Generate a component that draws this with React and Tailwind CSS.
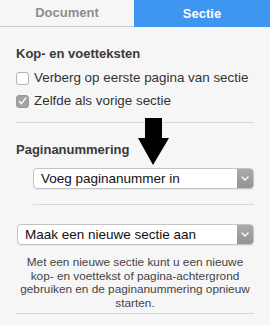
import React from 'react';

const Chevron = () => (
  <svg width="8" height="5" viewBox="0 0 8 5" fill="none">
    <path d="M1 1l3 3 3-3" stroke="#fff" strokeWidth="1.4" strokeLinecap="round" strokeLinejoin="round" />
  </svg>
);

const Select = ({ label, className = '' }) => (
  <div className={`flex h-[21px] rounded-[4px] border border-[#c4c4c4] bg-white overflow-hidden shadow-[0_1px_0_rgba(0,0,0,0.06)] ${className}`}>
    <div className="flex-1 pl-[7px] text-[13.5px] leading-[19px] text-[#111]">{label}</div>
    <div className="w-[16px] flex items-center justify-center bg-gradient-to-b from-[#ababab] to-[#939393]">
      <Chevron />
    </div>
  </div>
);

const Checkbox = ({ checked, label }) => (
  <div className="flex items-center gap-[5px] h-[14px]">
    {checked ? (
      <div className="w-[13px] h-[13px] rounded-[3px] bg-[#a3a3a3] border border-[#999] flex items-center justify-center">
        <svg width="9" height="8" viewBox="0 0 9 8" fill="none">
          <path d="M1.2 4.4l2.2 2.3L7.8 1" stroke="#fff" strokeWidth="1.3" strokeLinecap="round" strokeLinejoin="round" />
        </svg>
      </div>
    ) : (
      <div className="w-[13px] h-[13px] rounded-[3px] bg-white border border-[#b4b4b4]" />
    )}
    <span className="text-[13.4px] text-[#333]">{label}</span>
  </div>
);

export default function App() {
  return (
    <div
      className="relative w-[270px] h-[325px] bg-[#f6f6f6] overflow-hidden"
      style={{ fontFamily: '"Liberation Sans", Arial, sans-serif' }}
    >
      <div className="flex h-[27px]">
        <div className="w-[134px] flex items-center justify-center border-b border-[#c9c9c9] text-[13px] font-bold text-[#8e8e8e]">
          Document
        </div>
        <div className="flex-1 flex items-center justify-center bg-[#3e96f1] text-[13px] font-bold text-white">
          Sectie
        </div>
      </div>

      <div className="px-4">
        <div className="pt-[19px] text-[13px] leading-[16px] font-bold text-[#3a3a3a]">Kop- en voetteksten</div>
        <div className="flex flex-col gap-[9px] mt-[9px]">
          <Checkbox label="Verberg op eerste pagina van sectie" />
          <Checkbox checked label="Zelfde als vorige sectie" />
        </div>
        <div className="mt-[14px] border-t border-[#d9d9d9]" />

        <div className="mt-[19px] text-[13px] leading-[16px] font-bold text-[#3a3a3a]">Paginanummering</div>
        <div className="pl-[17px]">
          <Select label="Voeg paginanummer in" className="mt-[10px]" />
          <div className="mt-[15px] border-t border-[#d9d9d9]" />
        </div>

        <Select label="Maak een nieuwe sectie aan" className="mt-[19px] ml-[1px]" />
        <p className="mt-[11px] text-center text-[11.8px] leading-[13.5px] text-[#444] whitespace-nowrap">
          Met een nieuwe sectie kunt u een nieuwe
          <br />
          kop- en voettekst of pagina-achtergrond
          <br />
          gebruiken en de paginanummering opnieuw
          <br />
          starten.
        </p>
        <div className="mt-[3px] border-t border-[#d9d9d9]" />
      </div>

      <svg className="absolute left-[138px] top-[118px]" width="32" height="48" viewBox="0 0 32 48">
        <polygon points="7,0 24,0 24,20 31,20 15,47 0,20 7,20" fill="#000" />
      </svg>
    </div>
  );
}
